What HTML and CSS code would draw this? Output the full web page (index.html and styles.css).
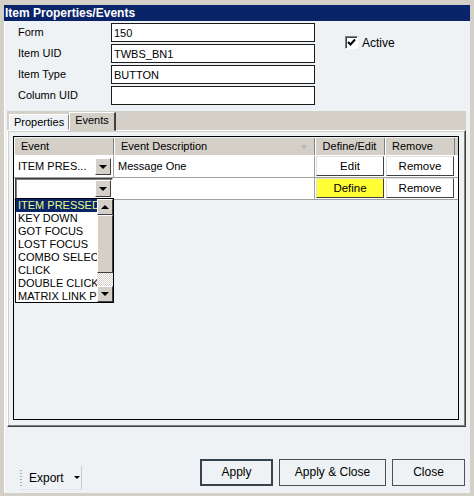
FILE: index.html
```html
<!DOCTYPE html>
<html lang="en">
<head>
  <meta charset="UTF-8" />
  <title>Item Properties/Events</title>
  <link rel="stylesheet" href="styles.css">
</head>
<body>
  <div class="window">
    <div class="titlebar">Item Properties/Events</div>

    <div class="client">
      <div class="head">
        <div class="fields">
          <span class="lbl">Form</span><input class="field" type="text" value="150" />
          <span class="lbl">Item UID</span><input class="field" type="text" value="TWBS_BN1" />
          <span class="lbl">Item Type</span><input class="field" type="text" value="BUTTON" />
          <span class="lbl">Column UID</span><input class="field" type="text" value="" />
        </div>
        <label class="active">
          <span class="checkbox">
            <svg width="9" height="9" viewBox="0 0 9 9"><path d="M1 4 L3.5 6.5 L8 1.5" fill="none" stroke="#000" stroke-width="2"/></svg>
          </span>
          Active
        </label>
      </div>

      <div class="tabs">
        <div class="tabstrip">
          <span class="tab">Properties</span>
          <span class="tab selected">Events</span>
        </div>
        <div class="tabpanel">
          <div class="grid">
            <div class="row header">
              <div class="hcell">Event</div>
              <div class="hcell sort">Event Description <span class="sort-arrow"></span></div>
              <div class="hcell center">Define/Edit</div>
              <div class="hcell">Remove</div>
            </div>

            <div class="row">
              <div class="cell combo">
                <span class="combo-text">ITEM PRES...</span>
                <span class="dropbtn"><i></i></span>
              </div>
              <div class="cell">Message One</div>
              <div class="cell btncell"><span class="gbtn">Edit</span></div>
              <div class="cell btncell"><span class="gbtn">Remove</span></div>
            </div>

            <div class="row">
              <div class="cell combo open">
                <span class="combo-text"></span>
                <span class="dropbtn"><i></i></span>
              </div>
              <div class="cell"></div>
              <div class="cell btncell"><span class="gbtn define">Define</span></div>
              <div class="cell btncell"><span class="gbtn">Remove</span></div>
            </div>

            <!-- open combo list for the second row -->
            <div class="droplist">
              <ul>
                <li class="sel">ITEM PRESSED</li>
                <li>KEY DOWN</li>
                <li>GOT FOCUS</li>
                <li>LOST FOCUS</li>
                <li>COMBO SELECT</li>
                <li>CLICK</li>
                <li>DOUBLE CLICK</li>
                <li>MATRIX LINK PRESSED</li>
              </ul>
              <div class="scrollbar">
                <span class="sbtn up"><i></i></span>
                <span class="thumb"></span>
                <span class="track"></span>
                <span class="sbtn down"><i></i></span>
              </div>
            </div>
          </div>
        </div>
      </div>

      <div class="footer">
        <div class="toolbar">
          <span class="grip"></span>
          <span class="export">Export</span>
          <span class="caret"></span>
        </div>
        <div class="actions">
          <button class="btn default">Apply</button>
          <button class="btn wide">Apply &amp; Close</button>
          <button class="btn">Close</button>
        </div>
      </div>
    </div>
  </div>
</body>
</html>
```

FILE: styles.css
```css
:root {
  --face:    #eef2f5;
  --classic: #d4d0c8;
  --navy:    #0a246a;
  --shadow:  #808080;
  --dark:    #404040;
}

* { box-sizing: border-box; }

body {
  margin: 0;
  font-family: "Liberation Sans", Arial, sans-serif;
  font-size: 11px;
  color: #000;
  background: var(--face);
}

.window {
  width: 474px;
  height: 496px;
  display: flex;
  flex-direction: column;
  background: var(--face);
  border-top: 5px solid var(--classic);
  border-left: 4px solid var(--classic);
  border-right: 4px solid var(--classic);
  border-bottom: 3px solid var(--classic);
  box-shadow: inset 1px 1px 0 #fff;
}

.titlebar {
  height: 16px;
  background: var(--navy);
  color: #fff;
  font-weight: bold;
  font-size: 12px;
  line-height: 16px;
  padding-left: 1px;
}

.client {
  flex: 1;
  display: flex;
  flex-direction: column;
}

/* header fields */
.head {
  display: flex;
  padding: 2px 0 0 14px;
  height: 90px;
  flex-shrink: 0;
}

.fields {
  display: grid;
  grid-template-columns: 93px 204px;
  grid-auto-rows: 19px;
  row-gap: 2px;
  align-items: center;
  align-content: start;
}

.lbl { line-height: 19px; }

.field {
  height: 19px;
  width: 204px;
  border: 1px solid #1a1a1a;
  background: #fff;
  font: inherit;
  padding: 0 2px;
  outline: none;
}

.active {
  display: flex;
  align-items: center;
  gap: 4px;
  margin: 13px 0 0 30px;
  height: 13px;
  font-size: 12px;
}

.checkbox {
  width: 13px;
  height: 13px;
  background: #fff;
  border: 1px solid;
  border-color: var(--shadow) #fff #fff var(--shadow);
  box-shadow: inset 1px 1px 0 var(--dark);
  display: flex;
  align-items: center;
  justify-content: center;
}

/* tab control */
.tabs {
  margin: 0 4px 0 3px;
  display: flex;
  flex-direction: column;
  flex-shrink: 0;
}

.tabstrip {
  height: 19px;
  background: var(--classic);
  display: flex;
  align-items: flex-end;
  padding-left: 2px;
}

.tab {
  height: 16px;
  line-height: 15px;
  padding: 0 4px;
  border: 1px solid;
  border-color: #fff var(--shadow) transparent #fff;
  background: var(--face);
  font-size: 11px;
}

.tab.selected {
  height: 19px;
  line-height: 15px;
  padding: 0 5px;
  background: var(--classic);
  border-right: 2px solid var(--dark);
  margin-bottom: -1px;
  position: relative;
}

.tabpanel {
  height: 297px;
  padding: 5px 6px 6px 5px;
  border: 1px solid;
  border-color: #fff var(--dark) var(--dark) #fff;
  box-shadow: inset -1px -1px 0 var(--shadow), inset 1px 1px 0 var(--classic);
  background: var(--face);
}

/* events matrix */
.grid {
  position: relative;
  height: 100%;
  border: 1px solid #000;
  background: var(--face);
  padding-top: 1px;
}

.row {
  display: grid;
  grid-template-columns: 100px 201px 70px 70px;
  height: 22px;
  background: #fff;
  border-bottom: 1px solid #a0a0a0;
}

.row.header {
  height: 18px;
  background: var(--classic);
  border-bottom: 1px solid #fff;
}

.hcell {
  padding-left: 7px;
  line-height: 17px;
  border-right: 1px solid var(--shadow);
  box-shadow: inset 1px 0 0 #fff;
}

.hcell.center { text-align: center; padding-left: 0; }

.hcell.sort { position: relative; }

.sort-arrow {
  position: absolute;
  right: 7px;
  top: 7px;
  width: 0;
  height: 0;
  border-left: 3px solid transparent;
  border-right: 3px solid transparent;
  border-top: 5px solid #b8b8b8;
}

.cell {
  line-height: 21px;
  padding-left: 4px;
  border-right: 1px solid #a0a0a0;
}

.combo {
  display: flex;
  align-items: center;
  justify-content: space-between;
  padding: 0 2px 0 4px;
}

.combo.open {
  margin: 0 1px 0 1px;
  height: 21px;
  border: 1px solid;
  border-color: var(--dark) #fff #fff var(--dark);
  box-shadow: inset 1px 1px 0 var(--shadow);
  padding-right: 1px;
}

.dropbtn {
  width: 16px;
  height: 17px;
  background: var(--classic);
  border: 1px solid;
  border-color: #fff var(--dark) var(--dark) #fff;
  display: flex;
  align-items: center;
  justify-content: center;
}

.dropbtn i, .sbtn i {
  width: 0;
  height: 0;
  border-left: 4px solid transparent;
  border-right: 4px solid transparent;
  border-top: 4px solid #000;
}

.btncell {
  padding: 0 1px 1px 1px;
  border-right: none;
}

.gbtn {
  display: block;
  height: 20px;
  line-height: 18px;
  text-align: center;
  background: #fff;
  border: 1px solid;
  border-color: #e0e0e0 var(--dark) var(--dark) #e0e0e0;
  font-size: 11.5px;
}

.gbtn.define { background: #ffff33; }

/* dropdown list */
.droplist {
  position: absolute;
  left: 1px;
  top: 61px;
  width: 99px;
  height: 105px;
  border: 1px solid #000;
  background: #fff;
  display: flex;
}

.droplist ul {
  flex: 1;
  min-width: 0;
  margin: 0;
  padding: 0;
  list-style: none;
  overflow: hidden;
}

.droplist li {
  height: 13px;
  line-height: 13px;
  padding-left: 2px;
  white-space: nowrap;
  font-size: 11px;
}

.droplist li.sel {
  background: var(--navy);
  color: #e8ff82;
}

.scrollbar {
  width: 16px;
  flex-shrink: 0;
  display: flex;
  flex-direction: column;
}

.sbtn {
  height: 16px;
  background: var(--classic);
  border: 1px solid;
  border-color: #fff var(--dark) var(--dark) #fff;
  display: flex;
  align-items: center;
  justify-content: center;
}

.sbtn.up i { border-top: none; border-bottom: 4px solid #000; }

.thumb {
  height: 58px;
  background: var(--classic);
  border: 1px solid;
  border-color: #fff var(--dark) var(--dark) #fff;
}

.track {
  flex: 1;
  background-color: #fff;
  background-image:
    linear-gradient(45deg, var(--classic) 25%, transparent 25%, transparent 75%, var(--classic) 75%),
    linear-gradient(45deg, var(--classic) 25%, transparent 25%, transparent 75%, var(--classic) 75%);
  background-size: 2px 2px;
  background-position: 0 0, 1px 1px;
}

/* bottom bar */
.footer {
  flex: 1;
  display: flex;
  align-items: flex-start;
  justify-content: space-between;
  padding: 32px 5px 0 16px;
}

.toolbar {
  margin-top: 7px;
  height: 24px;
  width: 62px;
  display: flex;
  align-items: center;
  border-right: 1px solid #c8ccd0;
  border-bottom: 1px solid #e4e8ea;
  font-size: 12px;
}

.grip {
  width: 2px;
  height: 16px;
  margin-right: 7px;
  background-image: linear-gradient(#a8acb0 50%, transparent 50%);
  background-size: 2px 3px;
}

.caret {
  margin-left: 10px;
  width: 0;
  height: 0;
  border-left: 3px solid transparent;
  border-right: 3px solid transparent;
  border-top: 3px solid #000;
}

.actions {
  display: flex;
  gap: 6px;
}

.btn {
  height: 27px;
  width: 73px;
  font: inherit;
  font-size: 12px;
  color: #000;
  background: var(--face);
  border: 1px solid #4a5056;
  padding: 0 0 2px 0;
}

.btn.default { border: 2px solid #38424c; }

.btn.wide { width: 107px; }
```
